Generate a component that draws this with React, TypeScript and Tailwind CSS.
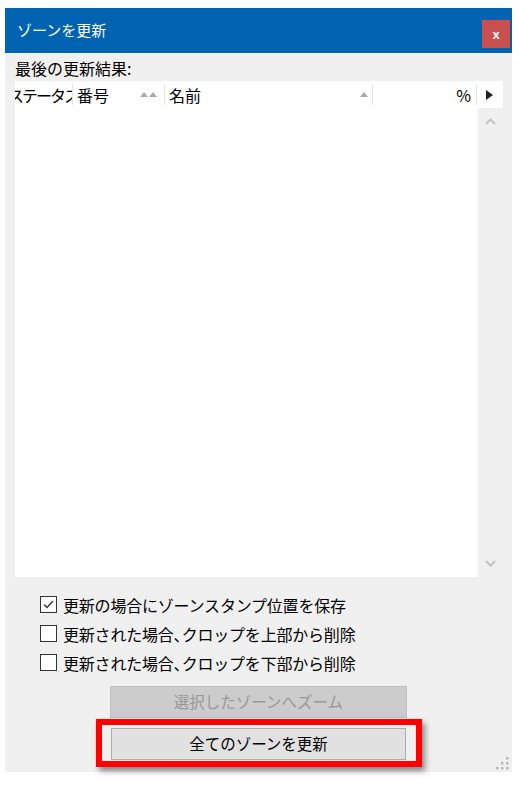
import React from "react";

function SortUp({ className = "" }: { className?: string }) {
  return (
    <svg width="8" height="5" viewBox="0 0 8 5" className={className}>
      <polygon points="0,5 4,0 8,5" fill="#a9a9a9" />
    </svg>
  );
}

function CheckBox({ checked, children }: { checked?: boolean; children: React.ReactNode }) {
  return (
    <div className="flex items-center h-[29px]">
      <div className="w-[17px] h-[17px] border border-[#333333] bg-white flex items-center justify-center">
        {checked && (
          <svg width="13" height="13" viewBox="0 0 13 13">
            <polyline
              points="2,6.5 5,9.5 11,3"
              fill="none"
              stroke="#333333"
              strokeWidth="1.3"
            />
          </svg>
        )}
      </div>
      <span className="ml-[6px] text-[16px] text-black leading-none tracking-[-0.2px]">
        {children}
      </span>
    </div>
  );
}

export default function App() {
  return (
    <div className="w-[520px] h-[789px] bg-white pt-[8px] pl-[5px] font-['Noto_Sans_CJK_JP',sans-serif]">
      {/* Window */}
      <div className="relative w-[507px] h-[764px] flex flex-col bg-[#f0f0f0]">
        {/* Title bar */}
        <div className="h-[45px] bg-[#0063b1] flex items-start justify-between pl-[12px] pr-[2px]">
          <span className="mt-[12px] text-white text-[15px] leading-[20px]">
            ゾーンを更新
          </span>
          <div className="mt-[12px] w-[28px] h-[28px] bg-[#c9504f] flex items-center justify-center">
            <span className="text-white text-[13px] font-bold leading-none font-['Liberation_Sans',sans-serif]">
              x
            </span>
          </div>
        </div>

        {/* Body */}
        <div className="flex-1 flex flex-col pl-[10px] pr-[9px] pt-[3px]">
          <div className="h-[25px] text-[16px] leading-[25px] text-black">
            最後の更新結果:
          </div>

          {/* List */}
          <div className="h-[496px] flex flex-col">
            {/* Header */}
            <div className="h-[27px] bg-white flex items-stretch text-[16px] text-black">
              <div className="w-[57px] overflow-hidden whitespace-nowrap flex items-center">
                <span className="ml-[-7px] tracking-[-2px]">ステータス</span>
              </div>
              <div className="w-px my-[3px] bg-[#e5e5e5]" />
              <div className="w-[91px] flex items-center pl-[4px]">
                <span>番号</span>
                <div className="ml-auto mr-[7px] flex gap-[1px]">
                  <SortUp />
                  <SortUp />
                </div>
              </div>
              <div className="w-px my-[3px] bg-[#e5e5e5]" />
              <div className="w-[207px] flex items-center pl-[4px]">
                <span>名前</span>
                <SortUp className="ml-auto mr-[4px]" />
              </div>
              <div className="w-px my-[3px] bg-[#e5e5e5]" />
              <div className="w-[103px] flex items-center justify-end pr-[5px]">
                <span>%</span>
              </div>
              <div className="w-px my-[3px] bg-[#e5e5e5]" />
              <div className="w-[25px] flex items-center justify-center">
                <svg width="7" height="10" viewBox="0 0 7 10">
                  <polygon points="0,0 7,5 0,10" fill="#222222" />
                </svg>
              </div>
            </div>

            {/* Rows + scrollbar */}
            <div className="flex-1 flex">
              <div className="w-[463px] bg-white" />
              <div className="w-[25px] flex flex-col items-center justify-between py-[10px]">
                <svg width="11" height="7" viewBox="0 0 11 7">
                  <polyline points="1,6 5.5,1.5 10,6" fill="none" stroke="#c2c2c2" strokeWidth="2" />
                </svg>
                <svg width="11" height="7" viewBox="0 0 11 7">
                  <polyline points="1,1 5.5,5.5 10,1" fill="none" stroke="#c2c2c2" strokeWidth="2" />
                </svg>
              </div>
            </div>
          </div>

          {/* Options */}
          <div className="mt-[13px] pl-[25px] flex flex-col">
            <CheckBox checked>更新の場合にゾーンスタンプ位置を保存</CheckBox>
            <CheckBox>
              更新された場合<span className="tracking-[-8px]">、</span>クロップを上部から削除
            </CheckBox>
            <CheckBox>
              更新された場合<span className="tracking-[-8px]">、</span>クロップを下部から削除
            </CheckBox>
          </div>

          {/* Buttons */}
          <div className="mt-[9px] pl-[95px] flex flex-col items-start gap-[10px]">
            <div className="w-[297px] h-[32px] bg-[#cccccc] border border-[#bfbfbf] flex items-center justify-center text-[15.5px] text-[#979797]">
              選択したゾーンへズーム
            </div>
            <div className="relative ml-[1px]">
              <div className="w-[295px] h-[32px] bg-[#e1e1e1] border border-[#adadad] flex items-center justify-center text-[15.5px] text-black">
                全てのゾーンを更新
              </div>
              <div className="absolute left-[-15px] right-[-16px] top-[-9px] bottom-[-7px] border-[6px] border-[#ff0000] shadow-[3px_4px_6px_rgba(0,0,0,0.45)]" />
            </div>
          </div>
        </div>

        {/* Resize grip */}
        <svg
          width="14"
          height="14"
          viewBox="0 0 14 14"
          className="absolute right-[3px] bottom-[2px]"
        >
          <rect x="11" y="1" width="2.5" height="2.5" fill="#b8b8b8" />
          <rect x="6" y="6" width="2.5" height="2.5" fill="#b8b8b8" />
          <rect x="11" y="6" width="2.5" height="2.5" fill="#b8b8b8" />
          <rect x="1" y="11" width="2.5" height="2.5" fill="#b8b8b8" />
          <rect x="6" y="11" width="2.5" height="2.5" fill="#b8b8b8" />
          <rect x="11" y="11" width="2.5" height="2.5" fill="#b8b8b8" />
        </svg>
      </div>
    </div>
  );
}
